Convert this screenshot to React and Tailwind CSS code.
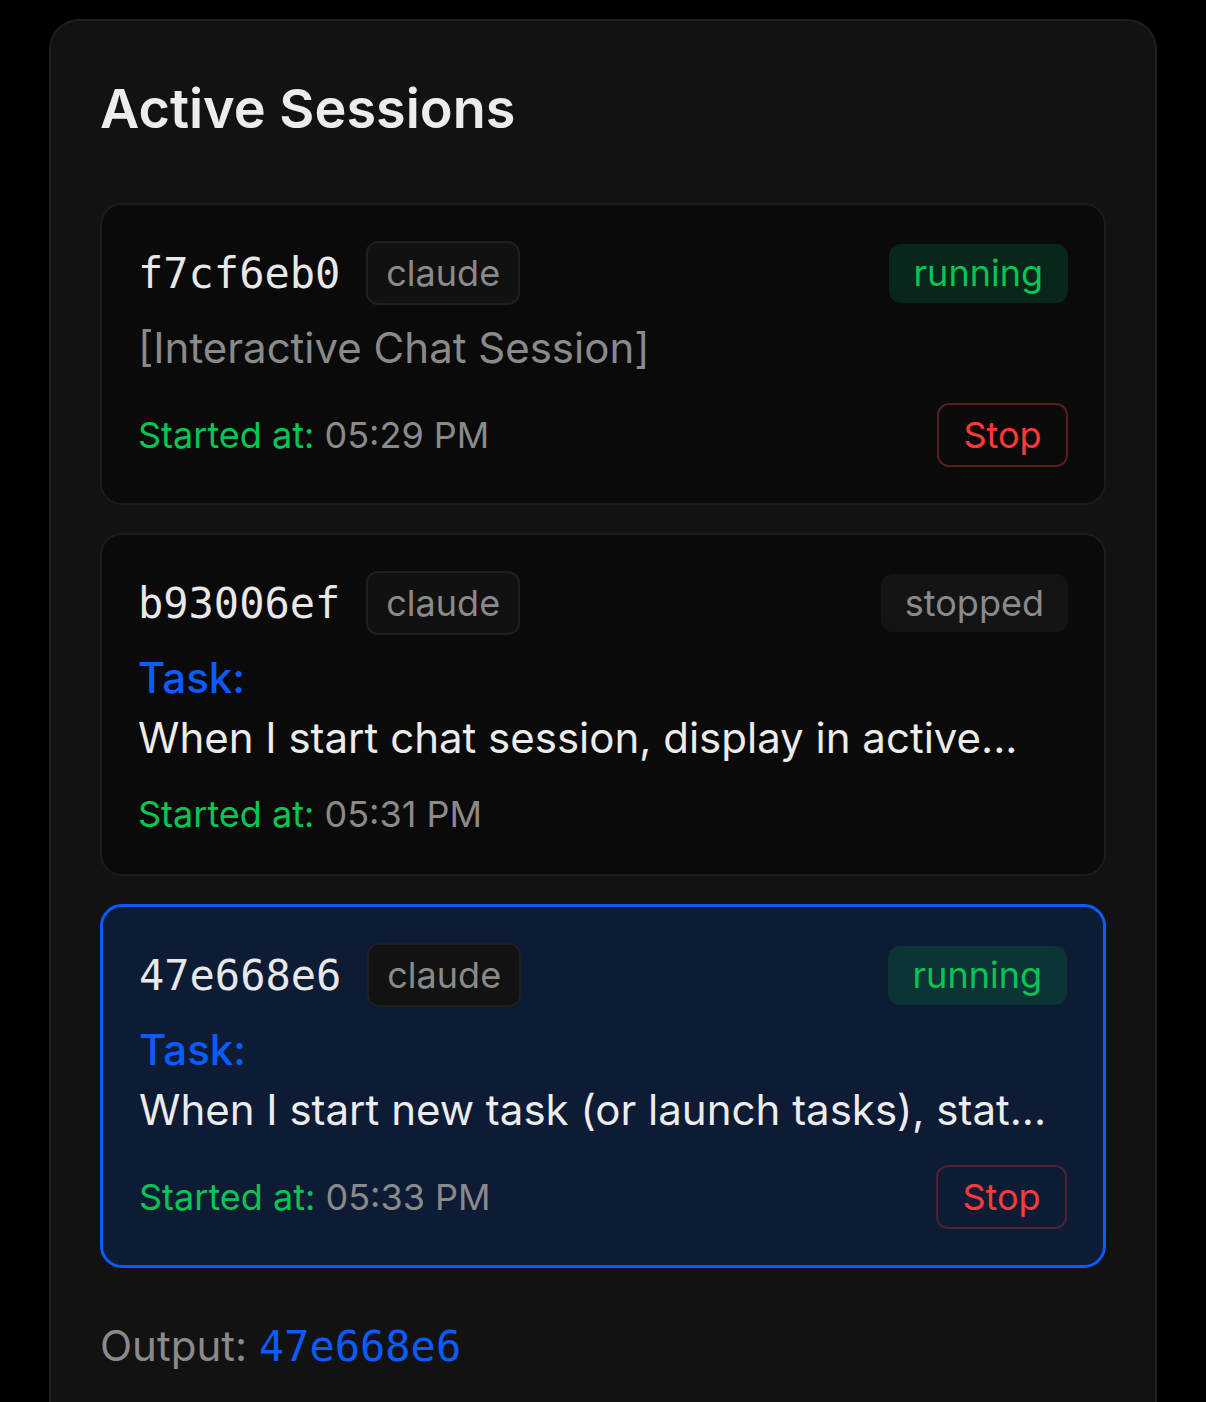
import React from "react";

const sans = { fontFamily: "Inter, 'Noto Sans', sans-serif" };
const mono = { fontFamily: "'DejaVu Sans Mono', 'Liberation Mono', monospace" };

function Badge({ children, tone }) {
  if (tone === "running")
    return (
      <span className="flex h-[59px] items-center rounded-[12px] bg-[#08261a] px-[25px] text-[36px] text-[#06c553]">
        {children}
      </span>
    );
  if (tone === "running-active")
    return (
      <span className="flex h-[59px] items-center rounded-[12px] bg-[#0c3436] px-[25px] text-[36px] text-[#06c553]">
        {children}
      </span>
    );
  return (
    <span className="flex h-[58px] items-center rounded-[12px] bg-[#141414] px-[24px] text-[36px] text-[#8a8a8a]">
      {children}
    </span>
  );
}

function Agent({ active }) {
  return (
    <span
      className={
        "flex h-[64px] items-center rounded-[12px] border-2 border-[#1f1f1f] px-[18px] text-[36px] text-[#8a8a8a] " +
        (active ? "bg-[#121212]" : "bg-[#111111]")
      }
    >
      claude
    </span>
  );
}

function StopButton({ active }) {
  return (
    <button
      className={
        "flex h-[64px] w-[131px] items-center justify-center rounded-[12px] border-2 text-[36px] text-[#ff3a3a] " +
        (active ? "border-[#4d2233]" : "border-[#5a1c1c]")
      }
      style={sans}
    >
      Stop
    </button>
  );
}

function Started({ time }) {
  return (
    <span className="text-[36px] leading-[54px]">
      <span className="text-[#06c553]">Started at:</span>{" "}
      <span className="text-[#8a8a8a]">{time}</span>
    </span>
  );
}

export default function App() {
  return (
    <div className="min-h-[1402px] w-full overflow-hidden bg-black" style={sans}>
      <div className="mx-[49px] mt-[19px] h-[1420px] rounded-[30px] border-2 border-b-0 border-[#1e1e1e] bg-[#121212] px-[49px] pt-[54px]">
        <h1 className="mb-[60px] text-[54px] font-semibold leading-[68px] text-[#ececec]">Active Sessions</h1>

        <div className="flex flex-col gap-[28px]">
          {/* Card 1 */}
          <div className="rounded-[22px] border-2 border-[#1c1c1c] bg-[#0a0a0a] p-[36px]">
            <div className="flex h-[64px] items-center justify-between">
              <div className="flex items-center gap-[26px]">
                <span className="text-[42px] text-[#e8e8e8]" style={mono}>f7cf6eb0</span>
                <Agent />
              </div>
              <Badge tone="running">running</Badge>
            </div>
            <div className="mt-[13px] text-[42px] leading-[60px] text-[#8a8a8a]">[Interactive Chat Session]</div>
            <div className="mt-[25px] flex h-[64px] items-center justify-between">
              <Started time="05:29 PM" />
              <StopButton />
            </div>
          </div>

          {/* Card 2 */}
          <div className="rounded-[22px] border-2 border-[#1c1c1c] bg-[#0a0a0a] px-[36px] pb-[33px] pt-[36px]">
            <div className="flex h-[64px] items-center justify-between">
              <div className="flex items-center gap-[26px]">
                <span className="text-[42px] text-[#e8e8e8]" style={mono}>b93006ef</span>
                <Agent />
              </div>
              <Badge>stopped</Badge>
            </div>
            <div className="mt-[13px] text-[42px] font-medium leading-[60px] text-[#0a5cff]">Task:</div>
            <div className="text-[42px] leading-[60px] text-[#ececec]">When I start chat session, display in active...</div>
            <div className="mt-[19px] flex items-center">
              <Started time="05:31 PM" />
            </div>
          </div>

          {/* Card 3 */}
          <div className="rounded-[22px] border-[3px] border-[#0a5cff] bg-[#0d1b35] p-[36px]">
            <div className="flex h-[64px] items-center justify-between">
              <div className="flex items-center gap-[26px]">
                <span className="text-[42px] text-[#e8e8e8]" style={mono}>47e668e6</span>
                <Agent active />
              </div>
              <Badge tone="running-active">running</Badge>
            </div>
            <div className="mt-[13px] text-[42px] font-medium leading-[60px] text-[#0a5cff]">Task:</div>
            <div className="text-[42px] leading-[60px] text-[#ececec]">When I start new task (or launch tasks), stat...</div>
            <div className="mt-[25px] flex h-[64px] items-center justify-between">
              <Started time="05:33 PM" />
              <StopButton active />
            </div>
          </div>
        </div>

        <div className="mt-[48px] text-[42px] leading-[60px]">
          <span className="text-[#8a8a8a]">Output:</span>{" "}
          <span className="text-[#0a5cff]" style={mono}>47e668e6</span>
        </div>
      </div>
    </div>
  );
}
